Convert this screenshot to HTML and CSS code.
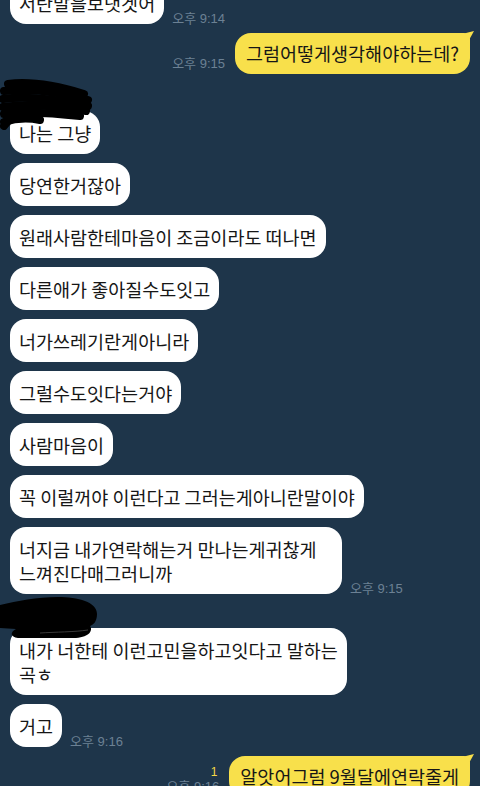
FILE: index.html
```html
<!DOCTYPE html>
<html>
<head>
    <title>채팅</title>
    <link rel="stylesheet" href="styles.css">
</head>
<body>
    <div class="chat">
        <div class="row in top-cut">
            <div class="bubble">서란말을보냇겟어</div>
            <span class="time">오후 9:14</span>
        </div>
        <div class="row out">
            <div class="meta"><span class="time">오후 9:15</span></div>
            <div class="bubble mine">그럼어떻게생각해야하는데?</div>
        </div>

        <!-- name hidden with marker -->
        <div class="name tall">
            <svg class="scribble one" width="96" height="52" viewBox="0 0 96 52">
                <g fill="none" stroke="#000" stroke-width="8" stroke-linecap="round" stroke-linejoin="round">
                    <path d="M8 6 C 30 3, 58 8, 84 16"/>
                    <path d="M4 13 C 30 10, 60 14, 88 22"/>
                    <path d="M3 21 C 30 17, 60 22, 88 28"/>
                    <path d="M3 29 C 30 25, 58 28, 86 33"/>
                    <path d="M4 36 C 28 33, 54 35, 80 38"/>
                    <path d="M4 44 C 16 40, 30 40, 40 42"/>
                    <path d="M4 48 L 14 36"/>
                </g>
            </svg>
        </div>
        <div class="row in"><div class="bubble">나는 그냥</div></div>
        <div class="row in"><div class="bubble">당연한거잖아</div></div>
        <div class="row in"><div class="bubble">원래사람한테마음이 조금이라도 떠나면</div></div>
        <div class="row in"><div class="bubble">다른애가 좋아질수도잇고</div></div>
        <div class="row in"><div class="bubble">너가쓰레기란게아니라</div></div>
        <div class="row in"><div class="bubble">그럴수도잇다는거야</div></div>
        <div class="row in"><div class="bubble">사람마음이</div></div>
        <div class="row in"><div class="bubble">꼭 이럴꺼야 이런다고 그러는게아니란말이야</div></div>
        <div class="row in">
            <div class="bubble wrap-a">너지금 내가연락해는거 만나는게귀찮게<br>느껴진다매그러니까</div>
            <span class="time">오후 9:15</span>
        </div>

        <div class="name">
            <svg class="scribble two" width="100" height="42" viewBox="0 0 100 42">
                <path fill="#000" d="M0 8 C 18 4, 36 0, 58 0 C 78 0, 97 5, 97 17 C 97 25, 93 28, 90 29 C 93 33, 90 40, 76 41 L 18 41 C 10 40, 10 35, 16 32 L 0 31 Z"/>
                <path fill="none" stroke="#3a3a3a" stroke-width="1" d="M40 36 C 55 35, 75 35, 88 33"/>
            </svg>
        </div>
        <div class="row in">
            <div class="bubble wrap-b">내가 너한테 이런고민을하고잇다고 말하는<br>곡ㅎ</div>
        </div>
        <div class="row in">
            <div class="bubble">거고</div>
            <span class="time">오후 9:16</span>
        </div>
        <div class="row out">
            <div class="meta">
                <span class="unread">1</span>
                <span class="time">오후 9:16</span>
            </div>
            <div class="bubble mine">알앗어그럼 9월달에연락줄게</div>
        </div>
    </div>
</body>
</html>
```
FILE: styles.css
```css
html, body {
    margin: 0;
    height: 100%;
    overflow: hidden;
}
body {
    background-color: #1e354a;
    font-family: "Noto Sans CJK KR", "Noto Sans", sans-serif;
}
.chat {
    display: flex;
    flex-direction: column;
    gap: 9px;
    padding: 0 10px;
}
.row {
    display: flex;
    align-items: flex-end;
}
.row.out {
    justify-content: flex-end;
}
.top-cut {
    margin-top: -19px;
}
.bubble {
    background-color: #fff;
    color: #161616;
    font-size: 18.5px;
    line-height: 24px;
    padding: 10px 9px 9px;
    border-radius: 16px;
    white-space: nowrap;
}
.bubble.wrap-a {
    width: 314px;
}
.bubble.wrap-b {
    width: 319px;
}
.bubble.mine {
    position: relative;
    background-color: #f8e04b;
    padding: 8px 11px 9px 11px;
    border-top-right-radius: 6px;
}
.bubble.mine::after {
    content: "";
    position: absolute;
    top: -2px;
    right: -4px;
    width: 12px;
    height: 12px;
    background-color: #f8e04b;
    clip-path: polygon(0 3px, 100% 0, 45% 100%, 0 100%);
}
.time {
    font-family: "Liberation Sans", "Noto Sans CJK KR", sans-serif;
    font-size: 13px;
    line-height: 15px;
    color: #6c8194;
    white-space: nowrap;
}
.row.in .time {
    margin-left: 8px;
    margin-bottom: -2px;
}
.meta {
    display: flex;
    flex-direction: column;
    align-items: flex-end;
    margin-right: 10px;
    margin-bottom: 3px;
}
.unread {
    font-family: "Liberation Sans", sans-serif;
    font-size: 12px;
    line-height: 13px;
    color: #f3d846;
    margin-right: 2px;
}
.name {
    position: relative;
    height: 16px;
}
.name.tall {
    height: 19px;
}
.scribble {
    position: absolute;
    left: -10px;
}
.scribble.one {
    top: -5px;
}
.scribble.two {
    top: -6px;
}
```
